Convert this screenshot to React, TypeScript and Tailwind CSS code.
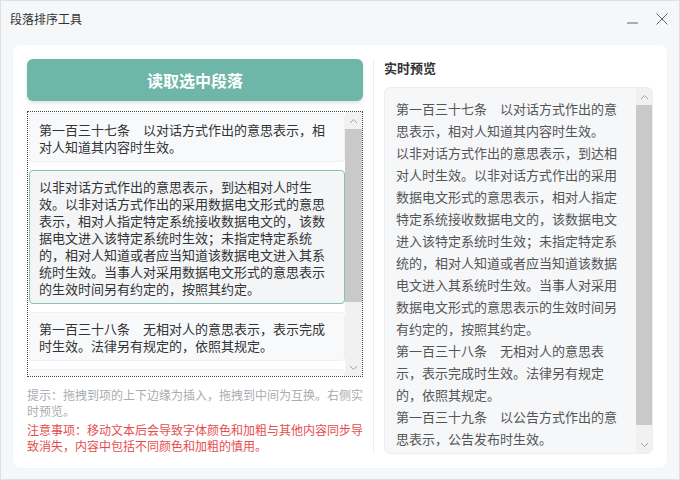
import { useState } from 'react';

const paragraphs = [
  '第一百三十七条\u3000以对话方式作出的意思表示，相对人知道其内容时生效。',
  '以非对话方式作出的意思表示，到达相对人时生效。以非对话方式作出的采用数据电文形式的意思表示，相对人指定特定系统接收数据电文的，该数据电文进入该特定系统时生效；未指定特定系统的，相对人知道或者应当知道该数据电文进入其系统时生效。当事人对采用数据电文形式的意思表示的生效时间另有约定的，按照其约定。',
  '第一百三十八条\u3000无相对人的意思表示，表示完成时生效。法律另有规定的，依照其规定。',
  '第一百三十九条\u3000以公告方式作出的意思表示，公告发布时生效。',
];

const ChevronUp = () => (
  <svg width="9" height="6" viewBox="0 0 9 6" fill="none">
    <polyline points="1,5 4.5,1.5 8,5" stroke="#a3a3a3" strokeWidth="1" />
  </svg>
);

const ChevronDown = () => (
  <svg width="9" height="6" viewBox="0 0 9 6" fill="none">
    <polyline points="1,1 4.5,4.5 8,1" stroke="#a3a3a3" strokeWidth="1" />
  </svg>
);

const App = () => {
  const [hovered, setHovered] = useState(1);

  return (
    <div className="w-[680px] h-[480px] bg-[#f5f7f9] border border-[#dde0e4] flex flex-col [font-family:'Noto_Sans_CJK_SC','Noto_Sans',sans-serif] overflow-hidden">
      {/* 标题栏 */}
      <div className="h-[36px] flex items-center justify-between pl-[9px] pr-[11px] shrink-0">
        <span className="text-[12px] text-[#333]">段落排序工具</span>
        <div className="flex items-center gap-[18px]">
          <svg width="11" height="11" viewBox="0 0 11 11">
            <line x1="0" y1="9" x2="11" y2="9" stroke="#666" strokeWidth="1" />
          </svg>
          <svg width="12" height="12" viewBox="0 0 12 12">
            <line x1="0.5" y1="0.5" x2="11.5" y2="11.5" stroke="#666" strokeWidth="1" />
            <line x1="11.5" y1="0.5" x2="0.5" y2="11.5" stroke="#666" strokeWidth="1" />
          </svg>
        </div>
      </div>

      <div className="flex-1 px-[12px] pt-[8px] pb-[12px] flex">
        <div className="flex-1 bg-white rounded-[8px] p-[14px] flex shadow-[0_0_2px_rgba(0,0,0,0.04)]">
          {/* 左侧 */}
          <div className="w-[336px] flex flex-col shrink-0">
            <button className="h-[42px] w-full rounded-[6px] bg-[#6db6a8] text-white text-[16px] font-bold shadow-[0_2px_4px_rgba(0,0,0,0.12)]">
              读取选中段落
            </button>

            <div className="mt-[10px] h-[266px] border border-dotted border-[#444] flex overflow-hidden">
              <div className="w-[317px] pl-[1px] pt-[1px] flex flex-col gap-[8px] overflow-hidden">
                {paragraphs.map((p, i) => (
                  <div
                    key={i}
                    onMouseEnter={() => setHovered(i)}
                    className={
                      i === hovered
                        ? 'shrink-0 rounded-[4px] border border-[#86c3b6] bg-[#f3f5f7] px-[9px] py-[6.5px] text-[13px] leading-[17px] text-[#333]'
                        : 'shrink-0 rounded-[4px] border border-[#eef0f3] bg-[#f8f9fb] px-[9px] py-[6.5px] text-[13px] leading-[17px] text-[#333]'
                    }
                  >
                    {p}
                  </div>
                ))}
              </div>
              <div className="ml-auto w-[17px] flex flex-col bg-[#f1f1f1]">
                <div className="h-[17px] flex items-center justify-center">
                  <ChevronUp />
                </div>
                <div className="h-[173px] bg-[#c9c9c9]" />
                <div className="flex-1" />
                <div className="h-[17px] flex items-center justify-center">
                  <ChevronDown />
                </div>
              </div>
            </div>

            <p className="mt-[10px] text-[12px] leading-[16px] text-[#a9acb1]">
              提示：拖拽到项的上下边缘为插入，拖拽到中间为互换。右侧实时预览。
            </p>
            <p className="mt-[3px] text-[12px] leading-[16px] text-[#e54d4d]">
              注意事项：移动文本后会导致字体颜色和加粗与其他内容同步导致消失，内容中包括不同颜色和加粗的慎用。
            </p>
          </div>

          <div className="ml-[10px] w-px bg-[#eceef1]" />

          {/* 右侧预览 */}
          <div className="ml-[10px] flex-1 flex flex-col">
            <div className="text-[13px] leading-[18px] font-bold text-[#333]">实时预览</div>
            <div className="mt-[10px] flex-1 flex rounded-[6px] border border-[#eceef1] bg-[#f6f7f9] overflow-hidden">
              <div className="w-[229px] ml-[11px] pt-[10px] text-[13px] leading-[22px] text-[#555] overflow-hidden">
                {paragraphs.map((p, i) => (
                  <p key={i}>{p}</p>
                ))}
              </div>
              <div className="ml-auto w-[16px] flex flex-col bg-[#f1f1f1]">
                <div className="h-[17px] flex items-center justify-center">
                  <ChevronUp />
                </div>
                <div className="h-[320px] bg-[#c9c9c9]" />
                <div className="flex-1" />
                <div className="h-[17px] flex items-center justify-center">
                  <ChevronDown />
                </div>
              </div>
            </div>
          </div>
        </div>
      </div>
    </div>
  );
};

export default App;
